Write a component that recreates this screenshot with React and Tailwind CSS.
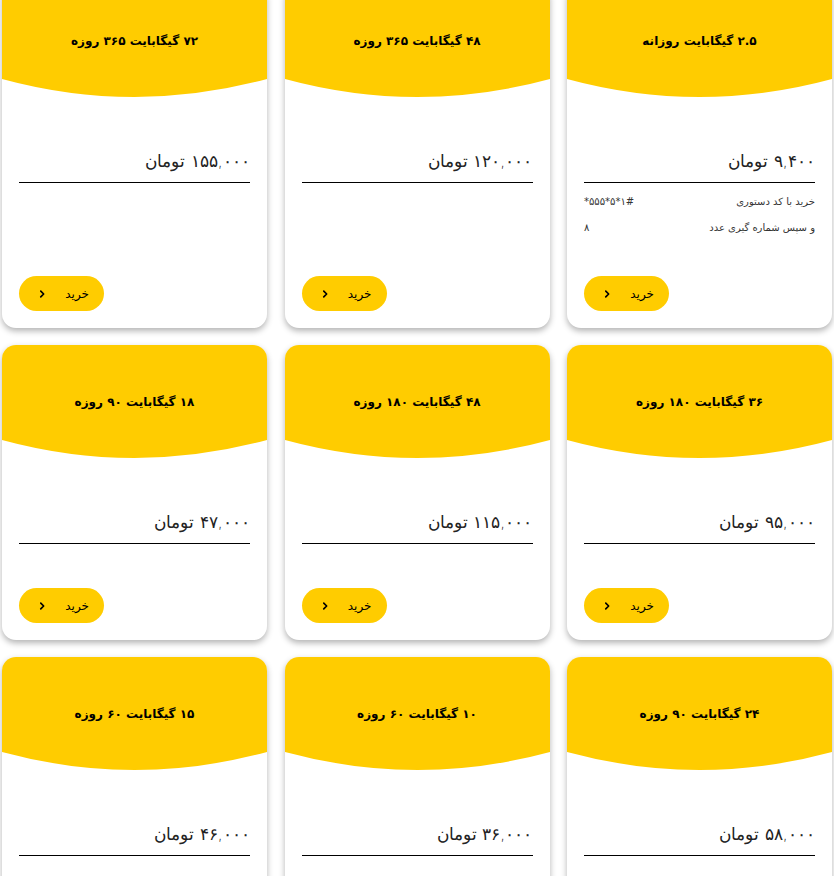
import React from 'react';

const plans = [
  { title: '۲.۵ گیگابایت روزانه', price: '۹,۴۰۰ تومان', ussd: true },
  { title: '۴۸ گیگابایت ۳۶۵ روزه', price: '۱۲۰,۰۰۰ تومان' },
  { title: '۷۲ گیگابایت ۳۶۵ روزه', price: '۱۵۵,۰۰۰ تومان' },
  { title: '۳۶ گیگابایت ۱۸۰ روزه', price: '۹۵,۰۰۰ تومان' },
  { title: '۴۸ گیگابایت ۱۸۰ روزه', price: '۱۱۵,۰۰۰ تومان' },
  { title: '۱۸ گیگابایت ۹۰ روزه', price: '۴۷,۰۰۰ تومان' },
  { title: '۲۴ گیگابایت ۹۰ روزه', price: '۵۸,۰۰۰ تومان' },
  { title: '۱۰ گیگابایت ۶۰ روزه', price: '۳۶,۰۰۰ تومان' },
  { title: '۱۵ گیگابایت ۶۰ روزه', price: '۴۶,۰۰۰ تومان' },
];

const Chevron = () => (
  <svg width="10" height="10" viewBox="0 0 24 24" fill="none" stroke="black" strokeWidth="4" strokeLinecap="round" strokeLinejoin="round">
    <polyline points="9 5 16 12 9 19" />
  </svg>
);

const PlanCard = ({ plan }) => (
  <div className="flex flex-col bg-white rounded-[14px] overflow-hidden shadow-[0_3px_6px_rgba(0,0,0,0.3)]">
    {/* Header */}
    <div className="flex flex-col">
      <div className="h-[95px] bg-[#ffcc00] flex items-center justify-center pt-[19px]">
        <h3 className="text-[12px] font-bold text-black">{plan.title}</h3>
      </div>
      <svg className="block w-full h-[18px]" viewBox="0 0 265 18" preserveAspectRatio="none">
        <path d="M0 0 H265 Q132.5 36 0 0 Z" fill="#ffcc00" />
      </svg>
    </div>

    {/* Body */}
    <div className="flex-1 flex flex-col px-[17px] pb-[17px]">
      <div className="mt-[50px] pb-[7px] border-b border-black text-[17px] leading-[28px] font-light text-[#222]">
        {plan.price}
      </div>

      {plan.ussd ? (
        <div className="flex-1 pt-[6px] pb-[35px] text-[10px] leading-[26px] text-[#333]">
          <div className="flex justify-between">
            <span>خرید با کد دستوری</span>
            <span dir="ltr">*۵۵۵*۵*۱#</span>
          </div>
          <div className="flex justify-between">
            <span>و سپس شماره گیری عدد</span>
            <span>۸</span>
          </div>
        </div>
      ) : (
        <div className="flex-1 min-h-[44px]" />
      )}

      <div className="flex justify-end">
        <button className="h-[35px] w-[85px] rounded-full bg-[#ffcc00] flex items-center justify-between pr-[15px] pl-[18px] text-[12px] text-black">
          <span>خرید</span>
          <Chevron />
        </button>
      </div>
    </div>
  </div>
);

const App = () => {
  return (
    <div dir="rtl" className="w-full bg-white" style={{ fontFamily: '"DejaVu Sans", sans-serif' }}>
      <div className="-mt-[16px] px-[2px] pb-[20px] grid grid-cols-3 gap-x-[17.5px] gap-y-[17px]">
        {plans.map((plan, i) => (
          <PlanCard key={i} plan={plan} />
        ))}
      </div>
    </div>
  );
};

export default App;
